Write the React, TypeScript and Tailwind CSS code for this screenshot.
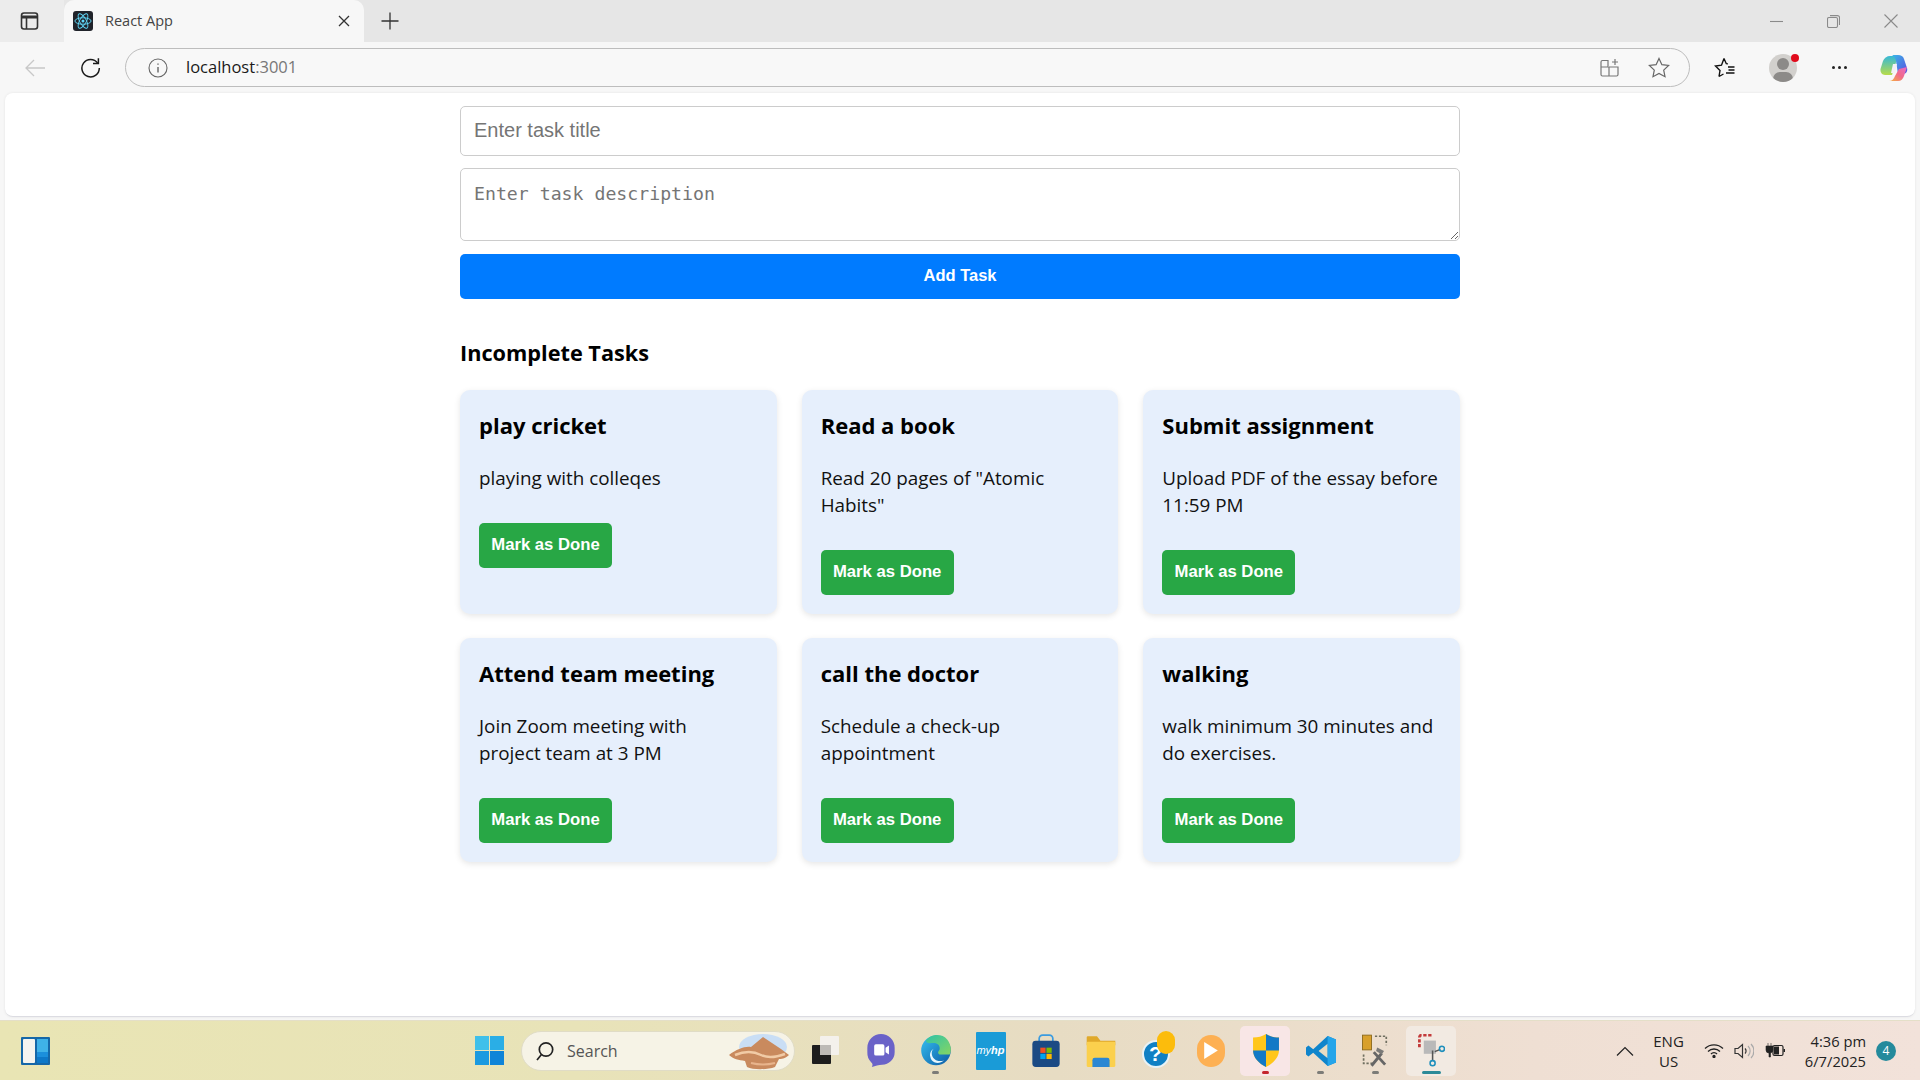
import React from "react";

const ui = { fontFamily: '"Open Sans", "Noto Sans", sans-serif' };
const arial = { fontFamily: '"Liberation Sans", Arial, sans-serif' };

const tasks = [
  ["play cricket", "playing with colleqes"],
  ["Read a book", 'Read 20 pages of "Atomic\nHabits"'],
  ["Submit assignment", "Upload PDF of the essay before\n11:59 PM"],
  ["Attend team meeting", "Join Zoom meeting with\nproject team at 3 PM"],
  ["call the doctor", "Schedule a check-up\nappointment"],
  ["walking", "walk minimum 30 minutes and\ndo exercises."],
];

function TabBar() {
  return (
    <div className="flex h-[42px] bg-[#e6e6e6] items-end shrink-0">
      <div className="w-[64px] h-[42px] bg-[#ececec] flex items-center pl-[20px]">
        <svg width="20" height="20" viewBox="0 0 20 20" fill="none" stroke="#333" strokeWidth="1.6">
          <rect x="1.500" y="2" width="16" height="16" rx="2.500" />
          <path d="M1.500 6h16" strokeWidth="3" />
          <path d="M6.500 6v12" />
        </svg>
      </div>
      <div className="w-[300px] h-[42px] bg-[#f7f7f7] rounded-t-[10px] flex items-center pl-[9px] pr-[12px]">
        <div className="w-[20px] h-[20px] rounded-[3px] bg-[#20232a] flex items-center justify-center">
          <svg width="18" height="18" viewBox="0 0 20 20" fill="none" stroke="#61dafb" strokeWidth="1">
            <ellipse cx="10" cy="10" rx="9" ry="3.600" />
            <ellipse cx="10" cy="10" rx="9" ry="3.600" transform="rotate(60 10 10)" />
            <ellipse cx="10" cy="10" rx="9" ry="3.600" transform="rotate(120 10 10)" />
            <circle cx="10" cy="10" r="1.700" fill="#61dafb" stroke="none" />
          </svg>
        </div>
        <span className="ml-[12px] text-[14.500px] text-[#444] flex-1 pb-[1px]" style={ui}>React App</span>
        <svg width="12" height="12" viewBox="0 0 12 12" stroke="#333" strokeWidth="1.300" className="mr-[2px]">
          <path d="M1 1l10 10M11 1L1 11" />
        </svg>
      </div>
      <div className="h-[42px] flex items-center ml-[17px]">
        <svg width="18" height="18" viewBox="0 0 18 18" stroke="#333" strokeWidth="1.300">
          <path d="M9 0.500v17M0.500 9h17" />
        </svg>
      </div>
      <div className="flex-1" />
      <div className="h-[42px] flex items-center gap-[44px] pr-[22px]">
        <svg width="13" height="13" viewBox="0 0 13 13" stroke="#8a8a8a" strokeWidth="1.100"><path d="M0 6.500h13" /></svg>
        <svg width="13" height="13" viewBox="0 0 13 13" fill="none" stroke="#8a8a8a" strokeWidth="1.100">
          <rect x="0.500" y="2.500" width="10" height="10" rx="1.500" />
          <path d="M3 .600h7.500a2 2 0 0 1 2 2V10" />
        </svg>
        <svg width="14" height="14" viewBox="0 0 14 14" stroke="#8a8a8a" strokeWidth="1.100"><path d="M.500.500l13 13M13.500.500l-13 13" /></svg>
      </div>
    </div>
  );
}

function ToolBar() {
  return (
    <div className="flex h-[51px] bg-[#f7f7f7] items-center shrink-0">
      <div className="w-[125px] flex items-center shrink-0">
        <svg className="ml-[25px]" width="20" height="18" viewBox="0 0 20 18" fill="none" stroke="#c8c8c8" strokeWidth="1.300">
          <path d="M20 9H1M9 1L1 9l8 8" />
        </svg>
        <svg className="ml-[35px]" width="21" height="21" viewBox="0 0 21 21" fill="none" stroke="#1a1a1a" strokeWidth="1.500">
          <path d="M17.600 6A8.700 8.700 0 1 0 19.300 11" />
          <path d="M18.400 1.200V6.600H13" />
        </svg>
      </div>
      <div className="w-[1565px] h-[39px] rounded-full border border-[#bdbdbd] flex items-center bg-[#f8f8f8] shrink-0">
        <svg className="ml-[22px]" width="20" height="20" viewBox="0 0 20 20" fill="none" stroke="#666" strokeWidth="1.100">
          <circle cx="10" cy="10" r="9" />
          <path d="M10 9v5.500M10 5.400v1.400" strokeWidth="1.400" />
        </svg>
        <span className="ml-[18px] text-[16.500px] text-[#1a1a1a] leading-none" style={ui}>
          localhost<span className="text-[#777]">:3001</span>
        </span>
        <div className="flex-1" />
        <svg width="19" height="19" viewBox="0 0 19 19" fill="none" stroke="#777" strokeWidth="1.200">
          <path d="M2.500 2.500H8V9H1V4A1.500 1.500 0 0 1 2.500 2.500zM1 9v7.500A1.500 1.500 0 0 0 2.500 18H9V9M9 9h9v7.500a1.500 1.500 0 0 1-1.500 1.500H9M15 1v6M12 4h6" />
        </svg>
        <svg className="ml-[29px] mr-[19px]" width="22" height="21" viewBox="0 0 22 21" fill="none" stroke="#666" strokeWidth="1.200">
          <path d="M11 1.500l2.900 6.200 6.700.8-4.900 4.600 1.300 6.600L11 16.400l-6 3.300 1.300-6.600L1.400 8.500l6.700-.8z" />
        </svg>
      </div>
      <svg className="ml-[24px] shrink-0" width="21" height="21" viewBox="0 0 21 21" fill="none" stroke="#111" strokeWidth="1.400">
        <path d="M10 1.500l2.300 5.200 1.700.2M5 19.500l1-5.900L1.500 9l6-.8L10 1.500M5 19.500l4.500-2.500M14 10h6.500M14.500 13h6M12 16h8.500" />
      </svg>
      <div className="relative ml-[34px] w-[28px] h-[28px] rounded-full bg-[#d2d0cd] overflow-hidden shrink-0">
        <div className="absolute left-[8px] top-[4px] w-[12px] h-[12px] rounded-full bg-[#8c8a88]" />
        <div className="absolute left-[4px] top-[18px] w-[20px] h-[14px] rounded-full bg-[#8c8a88]" />
      </div>
      <div className="w-[8px] h-[8px] rounded-full bg-[#e00b1c] -ml-[6px] -mt-[20px] z-10 shrink-0" />
      <div className="ml-[33px] flex gap-[3px] shrink-0">
        <div className="w-[3px] h-[3px] rounded-full bg-[#222]" />
        <div className="w-[3px] h-[3px] rounded-full bg-[#222]" />
        <div className="w-[3px] h-[3px] rounded-full bg-[#222]" />
      </div>
      <svg className="ml-[33px] shrink-0" width="28" height="28" viewBox="0 0 28 28">
        <defs>
          <linearGradient id="cp1" x1="0" y1="0" x2="1" y2="1">
            <stop offset="0" stopColor="#3ab6e8" />
            <stop offset="1" stopColor="#5b4fe0" />
          </linearGradient>
          <linearGradient id="cp2" x1="0" y1="1" x2="1" y2="0">
            <stop offset="0" stopColor="#f7b23c" />
            <stop offset="0.500" stopColor="#f06a8a" />
            <stop offset="1" stopColor="#e86ac8" />
          </linearGradient>
          <linearGradient id="cp3" x1="0" y1="0" x2="0" y2="1">
            <stop offset="0" stopColor="#35b8d8" />
            <stop offset="1" stopColor="#b8dc4a" />
          </linearGradient>
        </defs>
        <path d="M10 2h8l-6 19H5C2 21 0 18 .500 15L3 7c1-3 4-5 7-5z" fill="url(#cp3)" />
        <path d="M12 1h6c3 0 5 1 6 4l3 9c1 3-1 6-4 6h-5l-2-13c-.500-3-2-5-4-6z" fill="url(#cp1)" />
        <path d="M9 27h9c3 0 5-2 6-5l3-9-8 2-4 7c-1 3-3 5-6 5z" fill="url(#cp2)" />
        <path d="M13 10h4l-2 9h-4z" fill="#f4f0f8" />
      </svg>
    </div>
  );
}

function Card({ title, desc }: { title: string; desc: string }) {
  return (
    <div className="bg-[#e6effc] rounded-[10px] px-[19px] pt-[17px] pb-[19px] shadow-[0_2px_6px_rgba(0,0,0,0.1)]" style={ui}>
      <h3 className="text-[22px] font-bold leading-[36px] text-black">{title}</h3>
      <p className="mt-[22px] text-[18.850px] leading-[27px] text-[#111] whitespace-pre-line">{desc}</p>
      <button className="block mt-[31px] h-[45px] w-[133px] bg-[#28a745] rounded-[5px] text-white font-bold text-[16.700px] pb-[1px]" style={arial}>
        Mark as Done
      </button>
    </div>
  );
}

function Main() {
  return (
    <div className="flex-1 mx-[5px] bg-white rounded-[8px] border-b border-[#dcdce2] min-h-0 shadow-[0_0_3px_rgba(0,0,0,0.08)]">
      <div className="w-[1000px] mx-auto pt-[13px]">
        <input
          placeholder="Enter task title"
          readOnly
          className="block w-full h-[50px] border border-[#ccc] rounded-[5px] px-[13px] pb-[2px] text-[20px] placeholder:text-[#757575] outline-none"
          style={arial}
        />
        <textarea
          placeholder="Enter task description"
          readOnly
          className="block w-full h-[73px] mt-[12px] border border-[#ccc] rounded-[5px] px-[13px] pt-[14px] pb-[8px] text-[18.200px] leading-[22px] placeholder:text-[#757575] outline-none"
          style={{ fontFamily: '"DejaVu Sans Mono", monospace' }}
        />
        <button className="block w-full h-[45px] mt-[13px] bg-[#007bff] rounded-[5px] text-white font-bold text-[16.500px] pb-[2px]" style={arial}>
          Add Task
        </button>
        <h2 className="mt-[36px] text-[21.700px] font-bold leading-[36px] text-black" style={ui}>Incomplete Tasks</h2>
        <div className="grid grid-cols-3 gap-x-[25px] gap-y-[24px] mt-[19px]">
          {tasks.map(([t, d]) => (
            <Card key={t} title={t} desc={d} />
          ))}
        </div>
      </div>
    </div>
  );
}

function Slot({ children, active, dot }: { children: React.ReactNode; active?: string; dot?: string }) {
  return (
    <div className="relative w-[55px] h-[50px] flex items-center justify-center">
      {active && <div className={`absolute top-0 bottom-0 left-[2px] right-[3px] rounded-[5px] ${active}`} />}
      <div className="relative flex items-center justify-center">{children}</div>
      {dot === "gray" && <div className="absolute bottom-[2px] left-[24px] w-[7px] h-[3px] rounded-full bg-[#7c7c78]" />}
      {dot === "red" && <div className="absolute bottom-[2px] left-[24px] w-[7px] h-[3px] rounded-full bg-[#c4262e]" />}
      {dot === "teal" && <div className="absolute bottom-[2px] left-[18px] w-[19px] h-[3px] rounded-full bg-[#2b8a98]" />}
    </div>
  );
}

function TaskBar() {
  return (
    <div className="h-[60px] shrink-0 flex items-center bg-[linear-gradient(90deg,#e9e5b4_0%,#e8e3b8_30%,#e7dcc3_55%,#efdfd3_80%,#f2e2da_100%)] border-t border-[#e4dfc8]">
      <svg className="ml-[21px] shrink-0" width="29" height="28" viewBox="0 0 29 28">
        <rect width="29" height="28" rx="1" fill="#1567a8" />
        <rect x="2" y="2" width="12" height="24" rx="1" fill="#f4f4f0" />
        <rect x="16" y="2" width="11" height="13" fill="#3fb2e8" />
        <rect x="16" y="15" width="11" height="5" fill="#1b8fdc" />
        <rect x="16" y="20" width="11" height="6" fill="#0d78c8" />
      </svg>
      <svg className="ml-[425px] shrink-0" width="29" height="29" viewBox="0 0 29 29">
        <rect width="14" height="14" fill="#3fc0ea" />
        <rect x="15" width="14" height="14" fill="#2aaee6" />
        <rect y="15" width="14" height="14" fill="#1a9ae0" />
        <rect x="15" y="15" width="14" height="14" fill="#0f84d8" />
      </svg>
      <div className="relative ml-[17px] w-[274px] h-[40px] rounded-full bg-[#f6f3e6] border border-[#e0dcc6] flex items-center shrink-0 overflow-hidden">
        <svg className="ml-[13px]" width="20" height="20" viewBox="0 0 20 20" fill="none" stroke="#222" strokeWidth="1.700">
          <circle cx="11" cy="8.500" r="6.700" />
          <path d="M6.500 13.500L2 19" />
        </svg>
        <span className="ml-[12px] text-[16px] text-[#555]" style={ui}>Search</span>
        <svg className="absolute right-[1px] top-[1px]" width="66" height="38" viewBox="0 0 66 38">
          <ellipse cx="36" cy="14" rx="24" ry="13" fill="#c9def5" />
          <path d="M2 22c8-6 16-9 22-8l12-10 18 12 8 6c-4 4-8 4-10 4l-4 8c-8 3-22 3-28 0l-2-6C12 27 6 26 2 22z" fill="#c98a5e" />
          <path d="M8 22c10-4 18-4 26 0s16 2 24-1" stroke="#f1cba6" strokeWidth="2.500" fill="none" />
          <path d="M24 30c8 2 16 2 24 0" stroke="#e8b48c" strokeWidth="2" fill="none" />
        </svg>
      </div>
      <div className="flex items-center ml-[3px] shrink-0">
        <Slot>
          <svg width="27" height="29" viewBox="0 0 27 29">
            <rect x="8" y="0" width="19" height="19" rx="1" fill="#f4f1ec" />
            <rect x="0" y="9" width="19" height="19" rx="1" fill="#1d1d1d" />
            <rect x="8" y="9" width="11" height="10" fill="#bdbab6" />
          </svg>
        </Slot>
        <Slot>
          <svg width="28" height="33" viewBox="0 0 24 29">
            <path d="M12 0a12 12 0 0 1 12 12v4a11 11 0 0 1-11 11c-3 0-6 1-9 2 1-2 .500-3-.500-4A12 12 0 0 1 0 16v-4A12 12 0 0 1 12 0z" fill="#6a62c8" />
            <rect x="6" y="9" width="9" height="10" rx="1.500" fill="#fff" />
            <path d="M16 12l3-2v8l-3-2z" fill="#fff" />
          </svg>
        </Slot>
        <Slot dot="gray">
          <svg width="30" height="33" viewBox="0 0 26 29">
            <defs>
              <linearGradient id="ed" x1="0" y1="0" x2="1" y2="1">
                <stop offset="0" stopColor="#35c1f1" />
                <stop offset="1" stopColor="#0c59a4" />
              </linearGradient>
              <linearGradient id="ed2" x1="0" y1="0" x2="1" y2="1">
                <stop offset="0" stopColor="#2ec3a8" />
                <stop offset="1" stopColor="#86d562" />
              </linearGradient>
            </defs>
            <circle cx="13" cy="14.500" r="13" fill="url(#ed)" />
            <path d="M4 6C8 0 18-1 23 5c3 4 4 9 2 13h-9c-2-1-1-3 0-4 1-3-1-6-5-6-3 0-6 1-7-2z" fill="url(#ed2)" />
            <path d="M11 13c-3 2-2 8 2 10 3 1 5 1 7 0-4 4-11 3-12-3-1-3 1-6 3-7z" fill="#e8f6fc" />
          </svg>
        </Slot>
        <Slot>
          <div className="w-[30px] h-[38px] bg-[#1a9bd7] rounded-[1px] flex items-center justify-center text-white text-[11px] italic" style={arial}>my<b>hp</b></div>
        </Slot>
        <Slot>
          <svg width="28" height="33" viewBox="0 0 24 29">
            <path d="M6 7V4a3 3 0 0 1 3-3h6a3 3 0 0 1 3 3v3" fill="none" stroke="#3a9be0" strokeWidth="1.500" />
            <rect x="0" y="6" width="24" height="23" rx="3" fill="#1b4a84" />
            <rect x="7" y="12" width="4.600" height="4.600" fill="#f25022" />
            <rect x="12.400" y="12" width="4.600" height="4.600" fill="#7fba00" />
            <rect x="7" y="17.400" width="4.600" height="4.600" fill="#00a4ef" />
            <rect x="12.400" y="17.400" width="4.600" height="4.600" fill="#ffb900" />
          </svg>
        </Slot>
        <Slot>
          <svg width="30" height="32" viewBox="0 0 25 28">
            <path d="M0 2a1 1 0 0 1 1-1h8l3 4h13v4H0z" fill="#e0a92a" />
            <rect x="0" y="6" width="25" height="22" rx="1" fill="#fbd04d" />
            <path d="M5 22a2 2 0 0 1 2-2h11a2 2 0 0 1 2 2v6H5z" fill="#2b87d3" />
          </svg>
        </Slot>
        <Slot>
          <div className="relative w-[28px] h-[34px]">
            <div className="absolute left-0 bottom-0 w-[28px] h-[28px] rounded-full bg-[#1080c4] border-2 border-[#e8f2f6] flex items-center justify-center text-white font-bold text-[21px] leading-none" style={arial}>?</div>
            <div className="absolute left-[15px] -top-[3px] w-[18px] h-[23px] rounded-full bg-[#fcbc0c]" />
          </div>
        </Slot>
        <Slot>
          <div className="w-[28px] h-[32px] rounded-full bg-[#fdb053] flex items-center justify-center">
            <svg width="14" height="17" viewBox="0 0 12 15"><path d="M0 0l12 7.500L0 15z" fill="#fff" /></svg>
          </div>
        </Slot>
        <Slot active="bg-[#f8e6e6]" dot="red">
          <svg width="26" height="33" viewBox="0 0 22 28">
            <path d="M11 0c3 2 7 3 11 3v11c0 6-5 11-11 14C5 25 0 20 0 14V3c4 0 8-1 11-3z" fill="#ffc61a" />
            <path d="M11 0c3 2 7 3 11 3v11H11zM0 14h11v14C5 25 0 20 0 14z" fill="#1279c6" />
          </svg>
        </Slot>
        <Slot dot="gray">
          <svg width="30" height="30" viewBox="0 0 25 25">
            <path d="M18 0l7 3v19l-7 3L6 14l-4 3-2-1.500V9.500L2 8l4 3z" fill="#0f85cc" />
            <path d="M18 6.500L10.500 12.500 18 18.500z" fill="#e7dcc3" />
            <path d="M18 0l7 3v19l-7 3z" fill="#25a5ea" />
          </svg>
        </Slot>
        <Slot dot="gray">
          <svg width="29" height="34" viewBox="0 0 25 30">
            <rect x="1" y="1" width="8" height="13" fill="#d8a02c" stroke="#8c6a1c" strokeWidth=".800" />
            <path d="M12 2h10v8M2 18v8h8" fill="none" stroke="#6f6f60" strokeWidth="1.500" strokeDasharray="2 1.500" />
            <path d="M9 28l9-11M11 16l10 11" stroke="#666" strokeWidth="2.500" />
            <path d="M14 12l6 3-2 3-5-3z" fill="#7a7a78" />
          </svg>
        </Slot>
        <div className="ml-[1px]">
          <Slot active="bg-[#f2eae2]" dot="teal">
            <svg width="27" height="33" viewBox="0 0 24 30" fill="none">
              <path d="M12 1H3a2 2 0 0 0-2 2v9" stroke="#c33a3a" strokeWidth="2.500" strokeDasharray="3 1.500" />
              <rect x="5" y="6" width="11" height="12" fill="#b9b9b9" />
              <path d="M13 15v9M15 16l5-2" stroke="#555" strokeWidth="1.400" />
              <circle cx="13" cy="26.500" r="2.300" stroke="#1f8fbc" strokeWidth="1.400" />
              <circle cx="21.500" cy="13.500" r="2.300" stroke="#1f8fbc" strokeWidth="1.400" />
            </svg>
          </Slot>
        </div>
      </div>
      <div className="flex-1" />
      <div className="flex items-center shrink-0 text-[#222]" style={ui}>
        <svg width="18" height="10" viewBox="0 0 18 10" fill="none" stroke="#222" strokeWidth="1.200"><path d="M1 9.500l8-8 8 8" /></svg>
        <div className="ml-[19px] text-[15px] leading-[20px] text-center">ENG<br />US</div>
        <svg className="ml-[20px]" width="20" height="15" viewBox="0 0 20 15" fill="none" stroke="#222" strokeWidth="1.300">
          <path d="M1 5.500a13 13 0 0 1 18 0M4 8.500a8.500 8.500 0 0 1 12 0M7 11a4 4 0 0 1 6 0" />
          <circle cx="10" cy="13.500" r="1" fill="#222" />
        </svg>
        <svg className="ml-[10px]" width="20" height="16" viewBox="0 0 20 16" fill="none" stroke="#333" strokeWidth="1.200">
          <path d="M1 5.500h3L8.500 1.500v13L4 10.500H1zM11 5.500a3.500 3.500 0 0 1 0 5" />
          <path d="M14 3a7 7 0 0 1 0 10M17 1a10 10 0 0 1 0 14" stroke="#aaa" />
        </svg>
        <svg className="ml-[11px]" width="20" height="15" viewBox="0 0 20 15">
          <path d="M3 0v3M6 0v3M1 3h7v4a3 3 0 0 1-2.500 3v4H4v-4A3 3 0 0 1 1 7z" fill="#222" stroke="#222" strokeWidth=".600" />
          <rect x="8" y="2.500" width="10" height="10" rx="1.500" fill="none" stroke="#222" strokeWidth="1.200" />
          <rect x="9" y="3.500" width="5" height="8" fill="#222" />
          <rect x="18.500" y="6" width="1.500" height="3" fill="#222" />
        </svg>
        <div className="ml-[20px] text-[14.700px] leading-[20px] text-right">4:36 pm<br />6/7/2025</div>
        <div className="ml-[10px] mr-[24px] w-[20px] h-[20px] rounded-full bg-[#248a9c] text-white text-[12px] flex items-center justify-center">4</div>
      </div>
    </div>
  );
}

export default function App() {
  return (
    <div className="w-[1920px] h-[1080px] flex flex-col bg-[#f7f7f7] overflow-hidden">
      <TabBar />
      <ToolBar />
      <Main />
      <div className="h-[3px] shrink-0" />
      <TaskBar />
    </div>
  );
}
